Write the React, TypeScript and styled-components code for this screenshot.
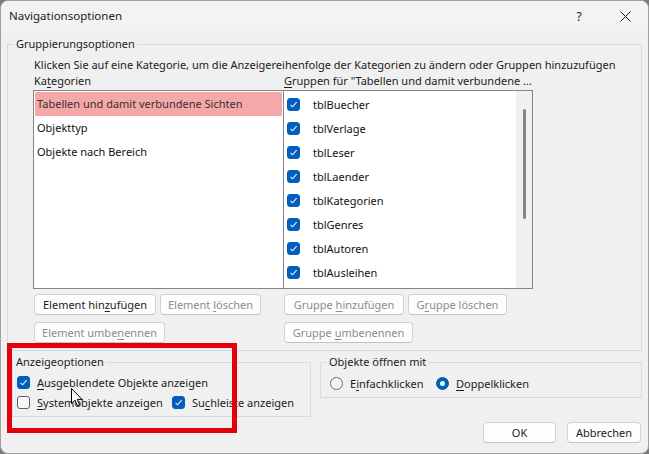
import styled, { createGlobalStyle } from "styled-components";

const GlobalStyle = createGlobalStyle`
  html, body {
    margin: 0;
    padding: 0;
    background: #7a7a7a;
  }
  body {
    font-family: "Noto Sans", "Segoe UI", sans-serif;
    font-size: 11px;
    color: #1b1b1b;
  }
`;

const Window = styled.div`
  position: relative;
  width: 649px;
  height: 454px;
  box-sizing: border-box;
  border: 1px solid #a0a0a0;
  border-radius: 8px;
  overflow: hidden;
  background: #f0f0f0;
  display: flex;
  flex-direction: column;
`;

const TitleBar = styled.div`
  height: 30px;
  display: flex;
  align-items: center;
  padding-left: 8px;
  background: #f3f3f3;
`;

const Title = styled.div`
  flex: 1;
  padding-bottom: 2px;
  font-size: 11.5px;
`;

const TitleButton = styled.div`
  width: 46px;
  height: 30px;
  display: flex;
  align-items: center;
  justify-content: center;
  font-size: 12px;
`;

const Body = styled.div`
  padding: 5px 6px 0 6px;
  display: flex;
  flex-direction: column;
`;

const Group = styled.fieldset<{ $ml?: number; $w?: number }>`
  margin: 0 0 0 ${(p) => p.$ml ?? 0}px;
  padding: 0;
  border: 1px solid #dadada;
  min-width: 0;
  ${(p) => (p.$w ? `width: ${p.$w}px; box-sizing: border-box;` : "")}
`;

const Legend = styled.legend<{ $ml?: number }>`
  padding: 0 2px;
  margin-left: ${(p) => p.$ml ?? 6}px;
  line-height: 16px;
`;

const GroupContent = styled.div`
  padding: 5px 7px 7px 25px;
  display: flex;
  flex-direction: column;
`;

const Instruction = styled.div`
  line-height: 16px;
  padding-left: 1px;
  white-space: nowrap;
`;

const Columns = styled.div`
  display: grid;
  grid-template-columns: 250px 250px;
`;

const ColLabel = styled.div`
  line-height: 15px;
  padding-left: 1px;
  white-space: nowrap;
`;

const ListsRow = styled.div`
  display: flex;
  margin-top: 2px;
`;

const LeftList = styled.div`
  width: 251px;
  height: 199px;
  box-sizing: border-box;
  border: 1px solid #858585;
  background: #fff;
  padding: 1px;
`;

const ListItem = styled.div<{ $selected?: boolean }>`
  height: 24px;
  line-height: 24px;
  padding-left: 2px;
  background: ${(p) => (p.$selected ? "#f5a8a8" : "transparent")};
  color: ${(p) => (p.$selected ? "#3a3030" : "#111")};
  white-space: nowrap;
`;

const RightList = styled.div`
  width: 250px;
  height: 199px;
  margin-left: -1px;
  box-sizing: border-box;
  border: 1px solid #858585;
  background: #fff;
  display: flex;
`;

const GroupItems = styled.div`
  flex: 1;
  padding: 1px 0 0 3px;
  overflow: hidden;
`;

const GroupItem = styled.div`
  height: 24px;
  display: flex;
  align-items: center;
  gap: 13px;
  color: #111;
`;

const ScrollTrack = styled.div`
  width: 16px;
  background: #f0f0f0;
  padding-top: 18px;
  display: flex;
  justify-content: center;
  align-items: flex-start;
`;

const ScrollThumb = styled.div`
  width: 3px;
  height: 110px;
  border-radius: 2px;
  background: #858585;
`;

const ButtonColumns = styled.div`
  display: grid;
  grid-template-columns: 250px 250px;
  margin-top: 5px;
`;

const ButtonStack = styled.div`
  display: flex;
  flex-direction: column;
  gap: 7px;
  padding-left: 1px;
`;

const ButtonRow = styled.div`
  display: flex;
  gap: 4px;
`;

const Button = styled.button<{ $w: number; $disabled?: boolean }>`
  width: ${(p) => p.$w}px;
  height: 21px;
  box-sizing: border-box;
  padding: 0;
  border: 1px solid #d3d3d3;
  border-bottom-color: #c4c4c4;
  border-radius: 4px;
  background: #fdfdfd;
  font-family: inherit;
  font-size: 11px;
  color: ${(p) => (p.$disabled ? "#8c8c8c" : "#1b1b1b")};
  white-space: nowrap;
`;

const U = styled.span`
  text-decoration: underline;
  text-underline-offset: 2px;
`;

const BottomRow = styled.div`
  display: flex;
  align-items: flex-start;
  margin-top: 3px;
  gap: 9px;
`;

const OptionContent = styled.div<{ $pt: number; $pb: number; $pl: number }>`
  padding: ${(p) => p.$pt}px 6px ${(p) => p.$pb}px ${(p) => p.$pl}px;
  display: flex;
  flex-direction: column;
`;

const OptionRow = styled.div<{ $first: number }>`
  display: grid;
  grid-template-columns: ${(p) => p.$first}px auto;
  height: 20px;
  align-items: center;
`;

const OptionItem = styled.label`
  display: flex;
  align-items: center;
  gap: 7px;
  white-space: nowrap;
`;

const Box = styled.span<{ $checked?: boolean }>`
  width: 13px;
  height: 13px;
  box-sizing: border-box;
  border-radius: 3px;
  border: 1px solid ${(p) => (p.$checked ? "#005fb8" : "#5f5f5f")};
  background: ${(p) => (p.$checked ? "#005fb8" : "#f8f8f8")};
  display: inline-flex;
  align-items: center;
  justify-content: center;
  flex-shrink: 0;
`;

const Radio = styled.span<{ $checked?: boolean }>`
  width: 13px;
  height: 13px;
  box-sizing: border-box;
  border-radius: 50%;
  border: 1px solid ${(p) => (p.$checked ? "#005fb8" : "#6a6a6a")};
  background: ${(p) => (p.$checked ? "#005fb8" : "#f6f6f6")};
  display: inline-flex;
  align-items: center;
  justify-content: center;
  flex-shrink: 0;
  &::after {
    content: "";
    display: ${(p) => (p.$checked ? "block" : "none")};
    width: 5px;
    height: 5px;
    border-radius: 50%;
    background: #fff;
  }
`;

const Footer = styled.div`
  display: flex;
  justify-content: flex-end;
  gap: 11px;
  margin-top: 5px;
  padding-right: 1px;
`;

const Highlight = styled.div`
  position: absolute;
  left: 6px;
  top: 342px;
  width: 230px;
  height: 90px;
  box-sizing: border-box;
  border: 5px solid #e3000b;
  pointer-events: none;
`;

const Cursor = styled.svg`
  position: absolute;
  left: 70px;
  top: 387px;
`;

function Check({ checked }: { checked?: boolean }) {
  return (
    <Box $checked={checked}>
      {checked && (
        <svg width="9" height="9" viewBox="0 0 9 9">
          <path d="M1.5 4.8 L3.6 6.8 L7.6 2.2" fill="none" stroke="#e8f0fb" strokeWidth="1.1" />
        </svg>
      )}
    </Box>
  );
}

const groups = [
  "tblBuecher",
  "tblVerlage",
  "tblLeser",
  "tblLaender",
  "tblKategorien",
  "tblGenres",
  "tblAutoren",
  "tblAusleihen",
];

export default function App() {
  return (
    <>
      <GlobalStyle />
      <Window>
        <TitleBar>
          <Title>Navigationsoptionen</Title>
          <TitleButton>?</TitleButton>
          <TitleButton>
            <svg width="11" height="11" viewBox="0 0 11 11">
              <path d="M0.5 0.5 L10.5 10.5 M10.5 0.5 L0.5 10.5" stroke="#1b1b1b" strokeWidth="1" />
            </svg>
          </TitleButton>
        </TitleBar>
        <Body>
          <Group>
            <Legend>Gruppierungsoptionen</Legend>
            <GroupContent>
              <Instruction>
                Klicken Sie auf eine Kategorie, um die Anzeigereihenfolge der Kategorien zu ändern oder Gruppen hinzuzufügen
              </Instruction>
              <Columns>
                <ColLabel>
                  Ka<U>t</U>egorien
                </ColLabel>
                <ColLabel>
                  <U>G</U>ruppen für "Tabellen und damit verbundene ...
                </ColLabel>
              </Columns>
              <ListsRow>
                <LeftList>
                  <ListItem $selected>Tabellen und damit verbundene Sichten</ListItem>
                  <ListItem>Objekttyp</ListItem>
                  <ListItem>Objekte nach Bereich</ListItem>
                </LeftList>
                <RightList>
                  <GroupItems>
                    {groups.map((g) => (
                      <GroupItem key={g}>
                        <Check checked />
                        {g}
                      </GroupItem>
                    ))}
                  </GroupItems>
                  <ScrollTrack>
                    <ScrollThumb />
                  </ScrollTrack>
                </RightList>
              </ListsRow>
              <ButtonColumns>
                <ButtonStack>
                  <ButtonRow>
                    <Button $w={122}>
                      Element hin<U>z</U>ufügen
                    </Button>
                    <Button $w={101} $disabled>
                      Element <U>l</U>öschen
                    </Button>
                  </ButtonRow>
                  <ButtonRow>
                    <Button $w={131} $disabled>
                      Element umbe<U>n</U>ennen
                    </Button>
                  </ButtonRow>
                </ButtonStack>
                <ButtonStack>
                  <ButtonRow>
                    <Button $w={120} $disabled>
                      Gruppe <U>h</U>inzufügen
                    </Button>
                    <Button $w={99} $disabled>
                      G<U>r</U>uppe löschen
                    </Button>
                  </ButtonRow>
                  <ButtonRow>
                    <Button $w={129} $disabled>
                      Gruppe <U>u</U>mbenennen
                    </Button>
                  </ButtonRow>
                </ButtonStack>
              </ButtonColumns>
            </GroupContent>
          </Group>

          <BottomRow>
            <Group $ml={5} $w={299}>
              <Legend $ml={1}>Anzeigeoptionen</Legend>
              <OptionContent $pt={2} $pb={4} $pl={4}>
                <OptionRow $first={155}>
                  <OptionItem>
                    <Check checked />
                    <span>
                      <U>A</U>usgeblendete Objekte anzeigen
                    </span>
                  </OptionItem>
                </OptionRow>
                <OptionRow $first={155}>
                  <OptionItem>
                    <Check />
                    <span>
                      <U>S</U>ystemobjekte anzeigen
                    </span>
                  </OptionItem>
                  <OptionItem>
                    <Check checked />
                    <span>
                      Su<U>c</U>hleiste anzeigen
                    </span>
                  </OptionItem>
                </OptionRow>
              </OptionContent>
            </Group>
            <Group $w={322}>
              <Legend>Objekte öffnen mit</Legend>
              <OptionContent $pt={3} $pb={4} $pl={9}>
                <OptionRow $first={106}>
                  <OptionItem>
                    <Radio />
                    <span>
                      E<U>i</U>nfachklicken
                    </span>
                  </OptionItem>
                  <OptionItem>
                    <Radio $checked />
                    <span>
                      <U>D</U>oppelklicken
                    </span>
                  </OptionItem>
                </OptionRow>
              </OptionContent>
            </Group>
          </BottomRow>

          <Footer>
            <Button $w={73}>OK</Button>
            <Button $w={74}>Abbrechen</Button>
          </Footer>
        </Body>

        <Highlight />
        <Cursor width="13" height="20" viewBox="0 0 13 20">
          <path
            d="M0.5 0.5 L0.5 15.5 L4 12.2 L6.4 17.8 L8.6 16.9 L6.3 11.4 L11 11.4 Z"
            fill="#fff"
            stroke="#000"
            strokeWidth="1"
            strokeLinejoin="round"
          />
        </Cursor>
      </Window>
    </>
  );
}
